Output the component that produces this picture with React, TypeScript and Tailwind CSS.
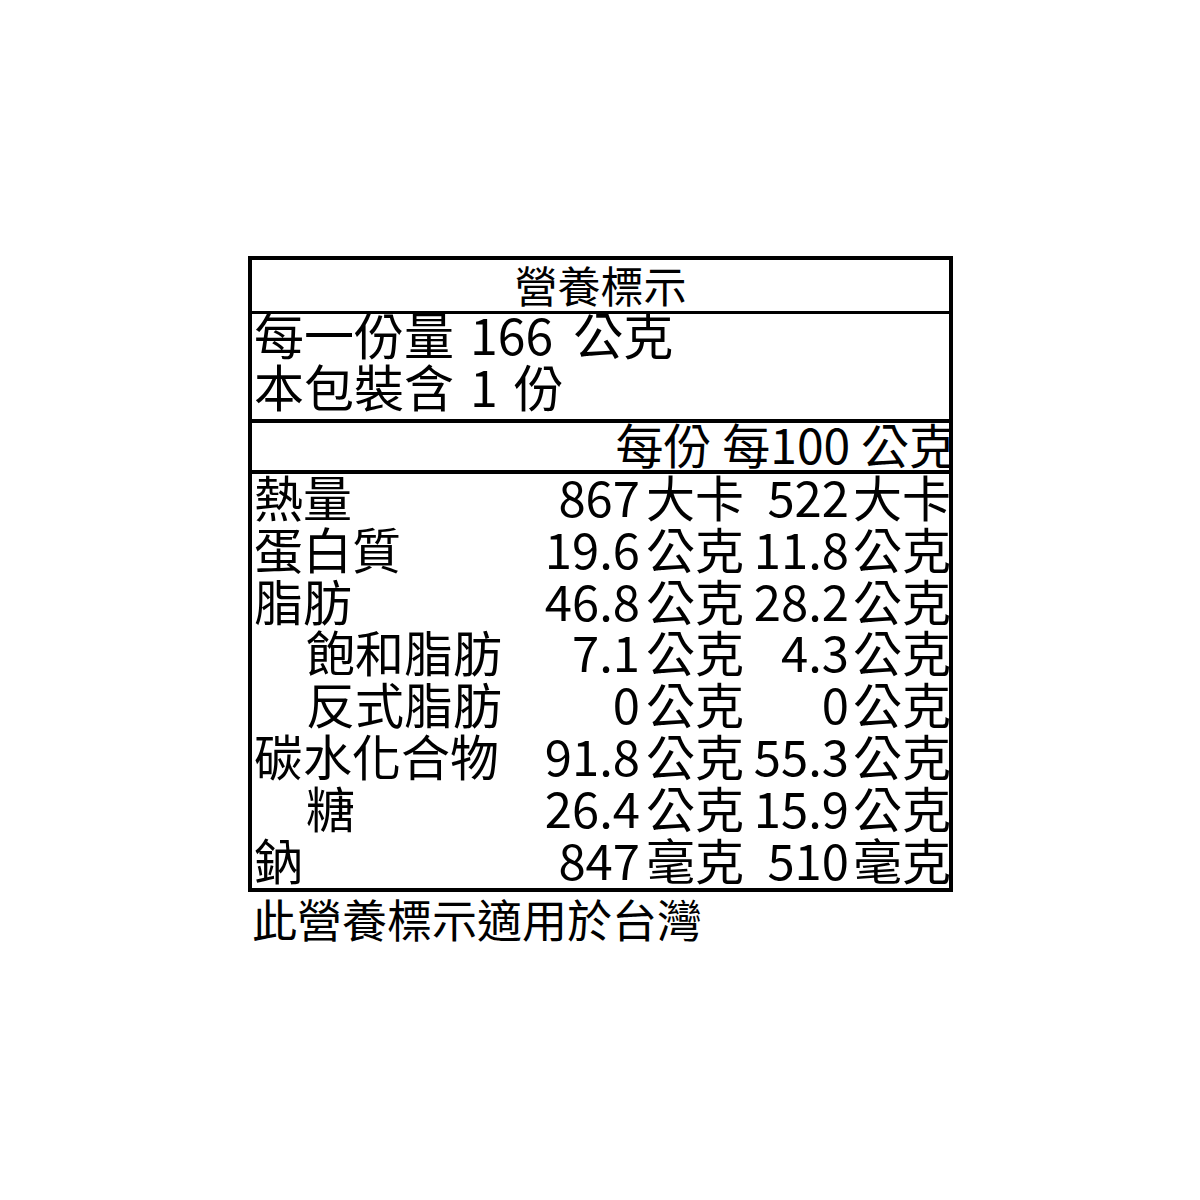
import React from 'react';

type Row = {
  label: string;
  indent?: boolean;
  v1: string;
  u1: string;
  v2: string;
  u2: string;
};

const rows: Row[] = [
  { label: '熱量', v1: '867', u1: '大卡', v2: '522', u2: '大卡' },
  { label: '蛋白質', v1: '19.6', u1: '公克', v2: '11.8', u2: '公克' },
  { label: '脂肪', v1: '46.8', u1: '公克', v2: '28.2', u2: '公克' },
  { label: '飽和脂肪', indent: true, v1: '7.1', u1: '公克', v2: '4.3', u2: '公克' },
  { label: '反式脂肪', indent: true, v1: '0', u1: '公克', v2: '0', u2: '公克' },
  { label: '碳水化合物', v1: '91.8', u1: '公克', v2: '55.3', u2: '公克' },
  { label: '糖', indent: true, v1: '26.4', u1: '公克', v2: '15.9', u2: '公克' },
  { label: '鈉', v1: '847', u1: '毫克', v2: '510', u2: '毫克' },
];

const App: React.FC = () => {
  return (
    <div
      className="min-h-[1200px] w-[1200px] bg-white text-black pt-[256px] pl-[248px]"
      style={{ fontFamily: '"Noto Sans CJK TC", "Noto Sans", sans-serif' }}
    >
      {/* Label box */}
      <div className="w-[705px] border-[4px] border-black overflow-hidden">
        {/* Title */}
        <div className="h-[51px] flex justify-center pt-[4px] text-[43px] leading-[40px]">
          營養標示
        </div>

        {/* Serving info */}
        <div className="border-t-[3px] border-black h-[108px] px-[2px] text-[50px] whitespace-nowrap">
          <p className="flex h-[52px] leading-[38px]">
            <span>每一份量</span>
            <span className="ml-[16px]">166</span>
            <span className="ml-[20px]">公克</span>
          </p>
          <p className="flex h-[52px] leading-[38px]">
            <span>本包裝含</span>
            <span className="ml-[16px]">1</span>
            <span className="ml-[16px]">份</span>
          </p>
        </div>

        {/* Column header */}
        <div className="border-t-[4px] border-black h-[51px] flex justify-end mr-[-8px] text-[48px] leading-[40px] whitespace-nowrap">
          每份 每100 公克
        </div>

        {/* Nutrients */}
        <div className="border-t-[4px] border-black px-[2px] text-[49px]">
          {rows.map((r) => (
            <div
              key={r.label}
              className="h-[51.8px] leading-[44px] grid grid-cols-[286px_100px_106px_103px_1fr] whitespace-nowrap"
            >
              <span className={r.indent ? 'pl-[52px]' : ''}>{r.label}</span>
              <span className="text-right">{r.v1}</span>
              <span className="pl-[6px]">{r.u1}</span>
              <span className="text-right">{r.v2}</span>
              <span className="pl-[4px]">{r.u2}</span>
            </div>
          ))}
        </div>
      </div>

      {/* Footer note */}
      <p className="pl-[4px] pt-[3px] text-[45px] leading-[48px] whitespace-nowrap">此營養標示適用於台灣</p>
    </div>
  );
};

export default App;
